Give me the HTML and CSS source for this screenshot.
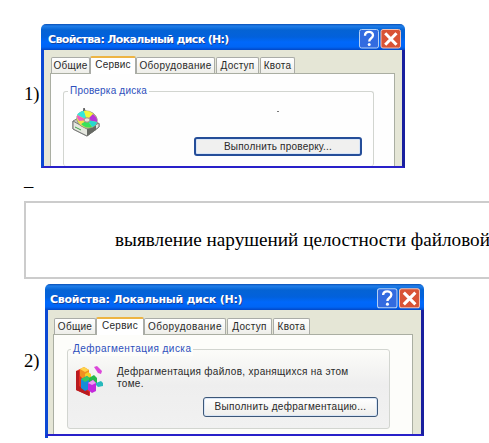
FILE: index.html
```html
<!DOCTYPE html>
<html lang="ru">
<head>
<meta charset="utf-8">
<title>Свойства диска</title>
<link rel="stylesheet" href="styles.css">
</head>
<body>
<main class="page">
  <section class="item item-check">
    <span class="marker">1)</span>
    <div class="window">
      <header class="titlebar">
        <span class="title">Свойства: Локальный диск (H:)</span>
        <svg class="controls" viewBox="0 0 43 20">
          <rect x=".5" y=".5" width="19" height="18.5" rx="2" fill="#326be0" stroke="#b3cff5"/>
          <path d="M6 6.7C6 1.8 14 1.8 14 6.3C14 9.3 10.2 9.2 10.2 12.4" fill="none" stroke="#fff" stroke-width="2.3"/>
          <circle cx="10.2" cy="15.5" r="1.5" fill="#fff"/>
          <rect x="22" y=".5" width="19.5" height="18.5" rx="2" fill="#d95335" stroke="#f2c1b4"/>
          <path d="M26.2 4.2 37.5 15.8M37.5 4.2 26.2 15.8" stroke="#fff" stroke-width="3"/>
        </svg>
      </header>
      <div class="body">
        <nav class="tabs">
          <span class="tab t1"><b>Общие</b></span><span class="tab t2 active"><b>Сервис</b></span><span class="tab t3"><b>Оборудование</b></span><span class="tab t4"><b>Доступ</b></span><span class="tab t5"><b>Квота</b></span>
        </nav>
        <div class="pane">
          <div class="group">
            <span class="legend">Проверка диска</span>
            <svg class="icon" viewBox="0 0 28 29">
              <path d="M1 13 14 6 27 16V19L15 28 1 21Z" fill="#c8cbc3" stroke="#777b75"/>
              <path d="M1 13 15 21 27 15V19L15 28 1 21Z" fill="#e5e7df" stroke="#777"/>
              <path d="M15 21v7l9-6v-5z" fill="#666963"/>
              <path d="M11 6 12 0 14 5" fill="#999" stroke="#555"/>
              <ellipse cx="15" cy="11.5" rx="10.5" ry="8.5" transform="rotate(17 15 11.5)" fill="#e8e05b" stroke="#8a8f88" stroke-width=".7"/>
              <path d="M15 12 5 7Q8 3 12 3Z" fill="#35e6dc"/>
              <path d="M15 12 12 3Q17 2 21 6Z" fill="#f0f83c"/>
              <path d="M15 12 21 6Q26 10 25 14Z" fill="#b536d8"/>
              <path d="M15 12 25 14Q24 18 20 19Z" fill="#26d8d0"/>
              <path d="M15 12 20 19Q14 21 9 16Z" fill="#38e25a"/>
              <path d="M15 12 9 16Q4 12 5 7Z" fill="#f6e04a"/>
              <path d="M15 12 7 13Q4.500 10 5 7Z" fill="#f05cc4"/>
              <ellipse cx="15" cy="12" rx="3" ry="2.2" fill="#e8e7df" stroke="#9f8c88"/>
              <path d="M3 19 9 22" stroke="#3ca34b"/>
            </svg>
            <span class="dot"></span>
            <div class="button"><span>Выполнить проверку...</span></div>
          </div>
        </div>
      </div>
    </div>
  </section>
  <p class="underscore">_</p>
  <div class="frame"><span>выявление нарушений целостности файловой</span></div>
  <section class="item item-defrag">
    <span class="marker">2)</span>
    <div class="window">
      <header class="titlebar">
        <span class="title">Свойства: Локальный диск (H:)</span>
        <svg class="controls" viewBox="0 0 43 20">
          <rect x=".5" y=".5" width="19" height="18.5" rx="2" fill="#326be0" stroke="#b3cff5"/>
          <path d="M6 6.7C6 1.8 14 1.8 14 6.3C14 9.3 10.2 9.2 10.2 12.4" fill="none" stroke="#fff" stroke-width="2.3"/>
          <circle cx="10.2" cy="15.5" r="1.5" fill="#fff"/>
          <rect x="22" y=".5" width="19.5" height="18.5" rx="2" fill="#d95335" stroke="#f2c1b4"/>
          <path d="M26.2 4.2 37.5 15.8M37.5 4.2 26.2 15.8" stroke="#fff" stroke-width="3"/>
        </svg>
      </header>
      <div class="body">
        <nav class="tabs">
          <span class="tab t1"><b>Общие</b></span><span class="tab t2 active"><b>Сервис</b></span><span class="tab t3"><b>Оборудование</b></span><span class="tab t4"><b>Доступ</b></span><span class="tab t5"><b>Квота</b></span>
        </nav>
        <div class="pane">
          <div class="group">
            <span class="legend">Дефрагментация диска</span>
            <svg class="icon" viewBox="0 0 29 31">
              <path d="M1 5 5 3 15 9V30L1 24Z" fill="#e52d20"/>
              <path d="M1 5V24L14 30V26L4 20V5Z" fill="#b91b20"/>
              <path d="M5 3 9 1 14 4V12L9 14 5 10Z" fill="#ef8f20"/>
              <path d="M5 3 9 1 14 4 10 6Z" fill="#ffd34c"/>
              <path d="M10 8 13 6 16 8V13L12 14 10 12Z" fill="#f0d028"/>
              <path d="M6 13 12 10 16 13V22L10 25 6 22Z" fill="#168dd8"/>
              <path d="M6 13 12 10 16 13 10 16Z" fill="#35c860"/>
              <path d="M14 12 19 9 22 12V17L17 19 14 17Z" fill="#24b84b"/>
              <path d="M13 17 18 14 21 17V25L17 27 13 24Z" fill="#c329dc"/>
              <path d="M13 17 18 14 21 17 17 19Z" fill="#ef9af4"/>
              <path d="M19 1 22 0 27 5 26 8 23 7Z" fill="#db47d9"/>
              <path d="M21 17 26 15 28 17V20L23 21 21 19Z" fill="#27b8bc"/>
            </svg>
            <p class="note"><span>Дефрагментация файлов, хранящихся на этом</span><br>томе.</p>
            <div class="button"><span>Выполнить дефрагментацию...</span></div>
          </div>
        </div>
      </div>
    </div>
  </section>
</main>
</body>
</html>
```
FILE: styles.css
```css
* { box-sizing: border-box; }
body { margin: 0; background: #fff; overflow: hidden; }
.page {
  width: 489px; height: 443px; overflow: hidden;
  padding: 24px 0 0 24px;
  font: 18.67px/22px "Liberation Serif", serif; color: #000;
}
.item { display: flex; }
.marker { flex: none; }
.item-check .marker { width: 17px; padding-top: 59px; }
.item-defrag .marker { width: 21px; padding-top: 66px; }
.window {
  flex: none; display: flex; flex-direction: column;
  overflow: hidden; border-radius: 5px 5px 0 0;
  font: 10px/14px "Liberation Sans", sans-serif; color: #292929;
}
.item-check .window { width: 364px; height: 144px; letter-spacing: .2px; }
.item-defrag .window { width: 379px; height: 154px; letter-spacing: .3px; }
.titlebar {
  flex: none; height: 26px; padding: 5px 3px 0 6px;
  display: flex; justify-content: space-between;
  background: linear-gradient(#0a4fb5 0, #207ee9 2px, #0563d4 6px, #0261dc 13px, #0068fb 18px, #0065f5 23px, #0347c5 26px);
}
.title {
  padding-top: 2px;
  font: bold 11px/18px "DejaVu Sans", sans-serif; color: #fff;
  white-space: nowrap; text-shadow: 1px 1px 0 #17439a;
}
.item-check .title { letter-spacing: -.65px; padding-left: 1px; }
.item-defrag .title { letter-spacing: -.25px; margin-left: -1px; }
.controls { width: 43px; height: 20px; flex: none; }
.item-defrag .controls { width: 44px; margin-top: -1px; height: 21px; }
.body {
  flex: 1; min-height: 0; background: #e5e6d6;
  border-style: solid; border-width: 0 3px 2px;
  border-color: #0b48d4 #191f9e #2820c9 #0b48d4;
  display: flex; flex-direction: column;
}
.item-check .body { padding: 6px 7px 0 6px; }
.item-defrag .body { padding: 7px 8px 0 5px; }
.item-defrag .window::after {
  content: ""; flex: none; height: 2px; width: 100%;
  border-style: solid; border-width: 0 3px; border-color: #191f9e #191f9e #191f9e #0b48d4; background: #fff;
}
.tabs { display: flex; align-items: flex-end; height: 17px; flex: none; padding-left: 1px; }
.tab {
  height: 16px; display: flex; justify-content: center; align-items: center;
  border: 1px solid #aaaca7; border-bottom: 0; border-radius: 2px 2px 0 0;
  background: linear-gradient(#fff, #eeeee9); white-space: nowrap;
}
.tab b { font-weight: normal; line-height: 14px; }
.tab.active { height: 18px; margin-bottom: -1px; z-index: 1; background: #fff; border-top: 2px solid #edb443; align-items: flex-start; }
.item-check .t1 { width: 39px; }
.item-check .t2 { width: 46px; }
.item-check .t3 { width: 79px; letter-spacing: .35px; }
.item-check .t4 { width: 43px; margin-left: 1px; }
.item-check .t5 { width: 35px; margin-left: 1px; }
.item-defrag .t1 { width: 42px; }
.item-defrag .t2 { width: 48px; }
.item-defrag .t3 { width: 82px; letter-spacing: .5px; }
.item-defrag .t4 { width: 45px; margin-left: 1px; }
.item-defrag .t5 { width: 37px; margin-left: 1px; }
.pane {
  flex: 1; min-height: 0; background: #fefefe;
  border: solid #aaaea2; border-width: 1px 1px 0;
}
.item-check .pane { padding: 17px 20px 0 12px; }
.item-defrag .pane { padding: 14px 22px 0 13px; background: #fdfdfa; }
.group { position: relative; border: 1px solid #d2d5d0; border-radius: 3px; }
.item-check .group { height: 75px; border-bottom: 0; padding: 16px 11px 0 8px; display: grid; grid-template-columns: 28px 1fr; grid-template-rows: 29px 20px; }
.item-defrag .group { height: 80px; padding: 16px 11px 0 7px; display: grid; grid-template-columns: 42px 1fr; grid-template-rows: 31px 20px; background: linear-gradient(#fcfcf9, #eee 45%, #f1f1f1); }
.legend {
  position: absolute; top: -8px; left: 4px; padding: 0 2px;
  background: #fefefe; color: #2d4fbc; white-space: nowrap;
}
.item-defrag .legend { left: 3px; background: #fdfdfa; letter-spacing: .45px; }
.icon { width: 28px; height: 29px; }
.item-defrag .icon { width: 29px; height: 31px; }
.dot { width: 2px; height: 1px; margin: 3px 0 0 177px; background: #777; }
.button {
  grid-column: 1 / -1; justify-self: end; height: 20px; width: 168px;
  border: 2px solid #254e99; border-radius: 3px;
  background: #f0f0ef; box-shadow: inset 0 0 0 1px #d8e5f7;
  display: flex; align-items: center; justify-content: center; white-space: nowrap;
}
.item-check .button { height: 19px; }
.item-defrag .button { width: 175px; border: 1px solid #3c5778; background: linear-gradient(#fff, #eeeeec); }
.note { margin: 0; line-height: 12px; white-space: nowrap; }
.underscore { margin: 1px 0 0; height: 22px; line-height: 22px; }
.frame {
  margin-top: 10px; width: 600px; height: 78px; border: 2px solid #ccc;
  padding: 26px 0 0 89px; white-space: nowrap; margin-bottom: 5px;
  font-size: 19.2px;
}
```
